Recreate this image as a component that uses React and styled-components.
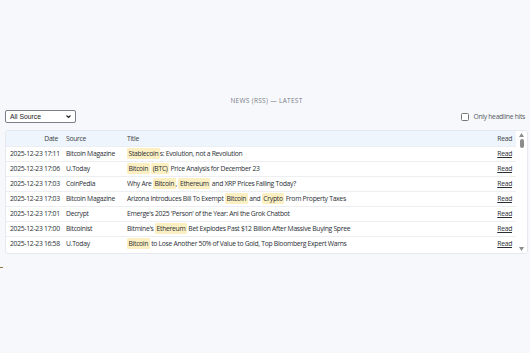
import React from 'react';
import styled, { createGlobalStyle } from 'styled-components';

const GlobalStyle = createGlobalStyle`
  html, body {
    margin: 0;
    padding: 0;
    background: #f7f8fc;
  }
  body {
    font-family: "Open Sans", "Noto Sans", sans-serif;
    color: #2b2f36;
  }
`;

const Page = styled.div`
  width: 530px;
  height: 353px;
  box-sizing: border-box;
  padding: 96px 2px 0 5px;
`;

const Heading = styled.div`
  text-align: center;
  font-size: 6.5px;
  letter-spacing: 0.3px;
  color: #7a7f88;
  text-transform: uppercase;
  line-height: 10px;
`;

const Toolbar = styled.div`
  display: flex;
  align-items: center;
  justify-content: space-between;
  margin-top: 3px;
  height: 14px;
`;

const SelectWrap = styled.div`
  position: relative;
  flex: 0 0 71px;
  height: 13px;
`;

const Select = styled.select`
  display: block;
  appearance: none;
  margin: 0;
  width: 71px;
  height: 13px;
  box-sizing: border-box;
  font-family: "Liberation Sans", Arial, sans-serif;
  font-size: 6.8px;
  line-height: 11px;
  padding: 0 0 0 4px;
  border: 1px solid #7a7f88;
  border-radius: 2px;
  background: #fff;
  color: #222;
  outline: none;
`;

const Chevron = styled.svg`
  position: absolute;
  right: 5px;
  top: 5px;
  pointer-events: none;
`;

const CheckLabel = styled.label`
  display: flex;
  align-items: center;
  gap: 4px;
  font-size: 6.8px;
  letter-spacing: -0.3px;
  color: #555a62;
  margin-right: 3px;
  margin-top: 1px;
`;

const Box = styled.span`
  width: 6px;
  height: 6px;
  border: 1px solid #777;
  border-radius: 1.5px;
  background: #fff;
`;

const Panel = styled.div`
  margin-top: 7px;
  height: 122px;
  display: flex;
  background: #fff;
  border: 1px solid #e6e9ef;
  border-radius: 3px;
  overflow: hidden;
`;

const Viewport = styled.div`
  flex: 1;
  overflow: hidden;
`;

const ScrollBar = styled.div`
  width: 11px;
  display: flex;
  flex-direction: column;
  align-items: center;
  padding: 2px 0;
  box-sizing: border-box;
`;

const Track = styled.div`
  flex: 1;
  width: 100%;
  display: flex;
  justify-content: center;
  padding-top: 2px;
`;

const Thumb = styled.div`
  width: 4px;
  height: 9px;
  border-radius: 2px;
  background: #8c8c8c;
`;

const Table = styled.table`
  width: 100%;
  table-layout: fixed;
  border-collapse: collapse;
  font-size: 6.8px;
  letter-spacing: -0.3px;
`;

const Th = styled.th`
  box-sizing: border-box;
  background: #eef5fc;
  font-weight: 400;
  color: #3a3f46;
  height: 15px;
  padding: 0 4px;
  text-align: ${(p) => p.align || 'left'};
  width: ${(p) => p.w || 'auto'};
`;

const Td = styled.td`
  box-sizing: border-box;
  height: 15px;
  padding: 0 4px;
  white-space: nowrap;
  overflow: hidden;
  text-align: ${(p) => p.align || 'left'};
  border-top: 1px solid #eceef1;
`;

const Hit = styled.span`
  background: #fcefc2;
  padding: 1px 1.5px;
  border-radius: 1px;
`;

const ReadLink = styled.a`
  color: #2b2f36;
  text-decoration: underline;
  cursor: pointer;
`;

const Stray = styled.div`
  width: 3px;
  height: 1px;
  margin: 13px 0 0 -5px;
  background: #8a7a40;
`;

const Arrow = ({ up }) => (
  <svg width="5" height="4" viewBox="0 0 5 4">
    <path d={up ? 'M0 4 L2.5 0 L5 4 Z' : 'M0 0 L2.5 4 L5 0 Z'} fill="#8c8c8c" />
  </svg>
);

const rows = [
  ['2025-12-23 17:11', 'Bitcoin Magazine', [['Stablecoin', 1], ['s: Evolution, not a Revolution']]],
  ['2025-12-23 17:06', 'U.Today', [['Bitcoin', 1], [' '], ['(BTC)', 1], [' Price Analysis for December 23']]],
  ['2025-12-23 17:03', 'CoinPedia', [['Why Are '], ['Bitcoin', 1], [', '], ['Ethereum', 1], [' and XRP Prices Falling Today?']]],
  ['2025-12-23 17:03', 'Bitcoin Magazine', [['Arizona Introduces Bill To Exempt '], ['Bitcoin', 1], [' and '], ['Crypto', 1], [' From Property Taxes']]],
  ['2025-12-23 17:01', 'Decrypt', [["Emerge's 2025 'Person' of the Year: Ani the Grok Chatbot"]]],
  ['2025-12-23 17:00', 'Bitcoinist', [["Bitmine's "], ['Ethereum', 1], [' Bet Explodes Past $12 Billion After Massive Buying Spree']]],
  ['2025-12-23 16:58', 'U.Today', [['Bitcoin', 1], [' to Lose Another 50% of Value to Gold, Top Bloomberg Expert Warns']]],
];

export default function App() {
  return (
    <Page>
      <GlobalStyle />
      <Heading>News (RSS) — Latest</Heading>
      <Toolbar>
        <SelectWrap>
          <Select defaultValue="all">
            <option value="all">All Source</option>
          </Select>
          <Chevron width="5" height="3" viewBox="0 0 5 3">
            <path d="M0.5 0.5 L2.5 2.5 L4.5 0.5" fill="none" stroke="#222" strokeWidth="1.1" />
          </Chevron>
        </SelectWrap>
        <CheckLabel>
          <Box />
          Only headline hits
        </CheckLabel>
      </Toolbar>
      <Panel>
        <Viewport>
          <Table>
            <thead>
              <tr>
                <Th align="right" w="56px">Date</Th>
                <Th w="61px">Source</Th>
                <Th>Title</Th>
                <Th align="right" w="28px">Read</Th>
              </tr>
            </thead>
            <tbody>
              {rows.map(([date, source, title], i) => (
                <tr key={i}>
                  <Td align="right">{date}</Td>
                  <Td>{source}</Td>
                  <Td>
                    {title.map(([t, hit], j) => (hit ? <Hit key={j}>{t}</Hit> : <span key={j}>{t}</span>))}
                  </Td>
                  <Td align="right">
                    <ReadLink>Read</ReadLink>
                  </Td>
                </tr>
              ))}
            </tbody>
          </Table>
        </Viewport>
        <ScrollBar>
          <Arrow up />
          <Track>
            <Thumb />
          </Track>
          <Arrow />
        </ScrollBar>
      </Panel>
      <Stray />
    </Page>
  );
}
